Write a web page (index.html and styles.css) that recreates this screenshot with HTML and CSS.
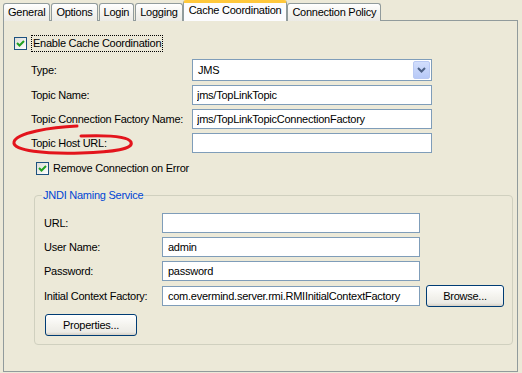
FILE: index.html
```html
<!DOCTYPE html>
<html lang="en">
<head>
    <meta charset="UTF-8">
    <title>Cache Coordination</title>
    <link rel="stylesheet" href="styles.css">
</head>
<body>
    <div class="tabs">
        <div class="tab">General</div>
        <div class="tab">Options</div>
        <div class="tab">Login</div>
        <div class="tab">Logging</div>
        <div class="tab selected">Cache Coordination</div>
        <div class="tab">Connection Policy</div>
    </div>

    <div class="panel">
        <label class="check enable">
            <span class="box"><svg width="11" height="11" viewBox="0 0 11 11"><path d="M2 5 L4.5 7.5 L9 3" fill="none" stroke="#21a121" stroke-width="2"/></svg></span>
            <span class="focus">Enable Cache Coordination</span>
        </label>

        <div class="form main">
            <span class="lbl">Type:</span>
            <div class="combo">
                <span>JMS</span>
                <span class="drop"><svg width="9" height="6" viewBox="0 0 9 6"><path d="M1 1 L4.5 4.5 L8 1" fill="none" stroke="#4d6185" stroke-width="2"/></svg></span>
            </div>
            <span class="lbl">Topic Name:</span>
            <input class="field" type="text" value="jms/TopLinkTopic">
            <span class="lbl">Topic Connection Factory Name:</span>
            <input class="field" type="text" value="jms/TopLinkTopicConnectionFactory">
            <span class="lbl">Topic Host URL:</span>
            <input class="field" type="text" value="">
        </div>

        <label class="check remove">
            <span class="box"><svg width="11" height="11" viewBox="0 0 11 11"><path d="M2 5 L4.5 7.5 L9 3" fill="none" stroke="#21a121" stroke-width="2"/></svg></span>
            <span>Remove Connection on Error</span>
        </label>

        <fieldset class="group">
            <legend>JNDI Naming Service</legend>
            <div class="form jndi">
                <span class="lbl">URL:</span>
                <input class="field" type="text" value="">
                <span></span>
                <span class="lbl">User Name:</span>
                <input class="field" type="text" value="admin">
                <span></span>
                <span class="lbl">Password:</span>
                <input class="field" type="text" value="password">
                <span></span>
                <span class="lbl">Initial Context Factory:</span>
                <input class="field" type="text" value="com.evermind.server.rmi.RMIInitialContextFactory">
                <button class="btn browse" type="button">Browse...</button>
            </div>
            <button class="btn props" type="button">Properties...</button>
        </fieldset>

        <!-- hand-drawn annotation over the Topic Host URL label -->
        <svg class="mark" width="140" height="50" viewBox="0 0 140 50">
            <path d="M71 3 C45 4 10 10 8 19 C6 28 40 31 75 30 C108 29 128 26 125 19 C122 13 100 12 75 13" fill="none" stroke="#e3141c" stroke-width="3" stroke-linecap="round"/>
        </svg>
    </div>
</body>
</html>
```

FILE: styles.css
```css
body {
    margin: 0;
    height: 373px;
    display: flex;
    flex-direction: column;
    font-family: "Liberation Sans", Arial, sans-serif;
    font-size: 11px;
    letter-spacing: -0.25px;
    color: #000;
    background-color: #ece9d8;
}

.tabs {
    display: flex;
    align-items: flex-end;
    gap: 1px;
    height: 21px;
    padding-left: 3px;
    margin-bottom: -1px;
    position: relative;
    z-index: 1;
}
.tab {
    height: 17px;
    line-height: 17px;
    padding: 0 4px;
    border: 1px solid #919b9c;
    border-bottom: none;
    border-radius: 3px 3px 0 0;
    background: linear-gradient(#ffffff, #f3f2ee 60%, #ecebe6);
}
.tab.selected {
    height: 18px;
    line-height: 15px;
    margin: 0 -1px;
    padding: 0 5px;
    border-top: 3px solid #ffc83c;
    background: #fcfcfe;
}

.panel {
    position: relative;
    flex: 1;
    margin: 0 4px 1px 3px;
    padding: 13px 0 0 10px;
    border: 1px solid #919b9c;
}

.check {
    display: flex;
    align-items: center;
    gap: 4px;
    height: 18px;
}
.box {
    display: flex;
    align-items: center;
    justify-content: center;
    width: 11px;
    height: 11px;
    border: 1px solid #1c5180;
    background: linear-gradient(135deg, #dcdcd7, #ffffff);
}
.focus {
    padding: 1px 1px 2px;
    outline: 1px dotted #000;
    margin-left: 1px;
}
.remove {
    margin: 6px 0 0 22px;
}

.form {
    display: grid;
    align-items: center;
    row-gap: 4px;
}
.main {
    grid-template-columns: 161px 240px;
    margin: 7px 0 0 17px;
}
.jndi {
    grid-template-columns: 118px 258px 84px;
    margin-left: 1px;
}

.field {
    box-sizing: border-box;
    height: 20px;
    margin: 0;
    padding: 0 4px;
    border: 1px solid #7f9db9;
    font: inherit;
    letter-spacing: inherit;
    background: #fff;
    outline: none;
}
.jndi .field {
    padding-left: 5px;
}

.combo {
    box-sizing: border-box;
    height: 22px;
    display: flex;
    align-items: center;
    justify-content: space-between;
    padding: 1px 1px 1px 5px;
    border: 1px solid #7f9db9;
    background: #fff;
}
.drop {
    box-sizing: border-box;
    width: 17px;
    height: 100%;
    display: flex;
    align-items: center;
    justify-content: center;
    border: 1px solid #b9c9f3;
    border-radius: 2px;
    background: linear-gradient(#d2defc, #b7c9f7);
}

.group {
    margin: 12px 4px 0 20px;
    padding: 11px 8px 8px 8px;
    border: 1px solid #d0d0bf;
    border-radius: 4px;
}
.group legend {
    padding: 0 1px;
    margin-left: -1px;
    line-height: 13px;
    color: #0046d5;
}

.btn {
    box-sizing: border-box;
    height: 22px;
    padding: 0;
    border: 1px solid #003c74;
    border-radius: 3px;
    font: inherit;
    letter-spacing: inherit;
    color: #000;
    background: linear-gradient(#ffffff, #f4f3ee 50%, #ecebe6 85%, #d6d0c5);
}
.browse {
    width: 78px;
    margin-left: 6px;
}
.props {
    display: block;
    width: 92px;
    margin: 7px 0 0 2px;
}

.mark {
    position: absolute;
    left: 2px;
    top: 102px;
}
```
